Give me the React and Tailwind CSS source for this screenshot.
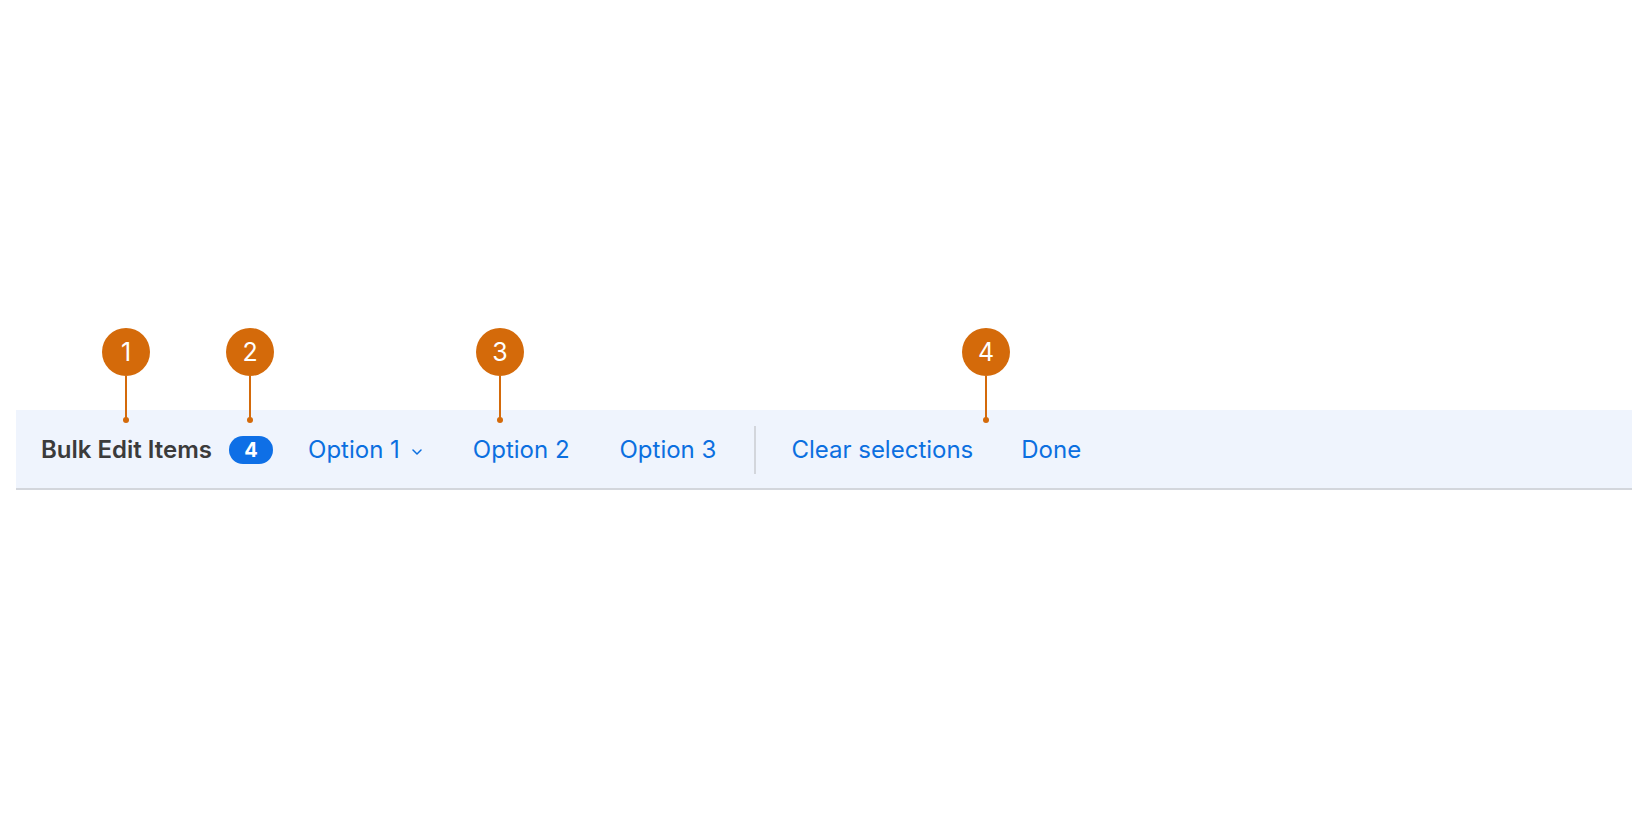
import React from "react";

const markers = [
  { n: 1, x: 102 },
  { n: 2, x: 226 },
  { n: 3, x: 476 },
  { n: 4, x: 962 },
];

const Marker = ({ n, x }) => (
  <div
    className="absolute top-0 flex flex-col items-center"
    style={{ left: x }}
  >
    <div className="w-12 h-12 rounded-full bg-[#d46a0a] text-white text-[25px] leading-none flex items-center justify-center">
      {n}
    </div>
    <div className="w-[2px] h-[44px] bg-[#d46a0a]" />
    <div className="w-[6px] h-[6px] -mt-[3px] rounded-full bg-[#d46a0a]" />
  </div>
);

const Chevron = () => (
  <svg width="10" height="6" viewBox="0 0 10 6" fill="none" className="ml-[12px] mt-[3px]">
    <path d="M1 1l4 4 4-4" stroke="#0b6fe0" strokeWidth="1.5" strokeLinecap="round" strokeLinejoin="round" />
  </svg>
);

export default function App() {
  return (
    <div className="w-full h-[816px] bg-white pt-[328px] font-['Inter',sans-serif]">
      <div className="relative">
        {markers.map((m) => (
          <Marker key={m.n} {...m} />
        ))}
        <div className="ml-4 pt-[82px]">
          <div className="h-[80px] pt-[2px] bg-[#eff4fd] border-b-2 border-[#d3d6dc] flex items-center pl-[25px]">
            <span className="text-[24px] font-semibold text-[#3b3b3b]">Bulk Edit Items</span>
            <span className="ml-[17px] w-11 h-7 rounded-full bg-[#0e6fe6] text-white text-[20px] font-bold flex items-center justify-center">
              4
            </span>
            <div className="flex items-center text-[24px] text-[#0b6fe0]">
              <button className="ml-[35px] flex items-center">
                Option 1
                <Chevron />
              </button>
              <button className="ml-[51px]">Option 2</button>
              <button className="ml-[50px]">Option 3</button>
              <div className="ml-[38px] w-[2px] h-12 bg-[#d3d6dc]" />
              <button className="ml-[35px]">Clear selections</button>
              <button className="ml-[48px]">Done</button>
            </div>
          </div>
        </div>
      </div>
    </div>
  );
}
